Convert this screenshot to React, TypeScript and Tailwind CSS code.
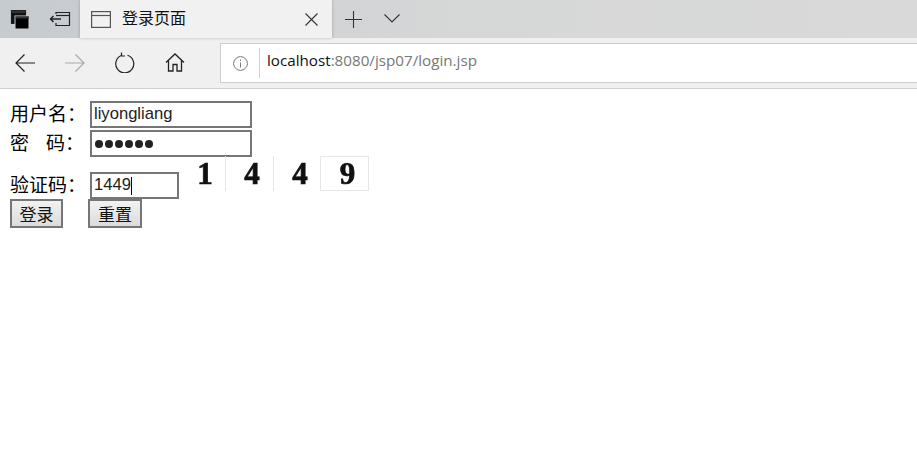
import React from "react";

const cjk = "font-['Liberation_Sans','Noto_Sans_CJK_SC',sans-serif]";
const digit = "h-[35px] flex items-center justify-center font-['Liberation_Serif',serif] font-bold text-[31px] text-[#111] [-webkit-text-stroke:0.7px_#111] blur-[0.5px] leading-none";
const label = "w-[80px] pb-[2px] whitespace-nowrap text-[19px] text-black font-['Noto_Sans_CJK_SC',sans-serif] font-normal";
const btn = "h-[29px] border-2 border-[#767676] bg-gradient-to-b from-[#f2f2f2] to-[#dcdcdc] text-[17px] text-[#111] font-['Noto_Sans_CJK_SC',sans-serif] font-normal";
const fieldBase = "h-[27px] border-2 border-[#767676] bg-white pl-[2px] flex items-center text-[16.6px] text-[#222] font-['Liberation_Sans',sans-serif]";

export default function App() {
  return (
    <div className={`w-[917px] h-[463px] bg-white overflow-hidden ${cjk}`}>
      {/* tab strip */}
      <div className="h-[38px] flex bg-gradient-to-r from-[#c6cbd0] via-[#d6d7d7] to-[#d9d9d9]">
        <div className="w-[40px] flex items-center justify-center">
          <svg width="20" height="20" viewBox="0 0 20 20">
            <path d="M1.500 1.500h14v3h-14z" fill="#333" />
            <path d="M1.500 1.500h14v13h-14z" fill="none" stroke="#222" strokeWidth="1.200" />
            <rect x="1.500" y="4" width="14" height="10" fill="#111" />
            <rect x="5" y="7" width="14" height="13" fill="#000" stroke="#d0d2d3" strokeWidth="1" />
            <rect x="5.500" y="7.500" width="13.500" height="2" fill="#333" />
          </svg>
        </div>
        <div className="w-[40px] flex items-center justify-center">
          <svg width="22" height="16" viewBox="0 0 22 16" fill="none" stroke="#222" strokeWidth="1.200">
            <path d="M7 3V1.500h13.500v13H7V12" />
            <path d="M7 4.500h13" />
            <path d="M1 8h11M4.500 5 1.500 8l3 3" strokeWidth="1.400" />
          </svg>
        </div>
        <div className="w-[252px] bg-[#f1f1f1] flex items-center pl-[11px] shadow-[0_0_3px_rgba(0,0,0,0.25)]">
          <svg width="20" height="17" viewBox="0 0 20 17" fill="none" stroke="#555" strokeWidth="1.200">
            <rect x="0.600" y="0.600" width="18.800" height="15.800" />
            <path d="M0.600 4.500h18.800" />
          </svg>
          <span className="ml-[11px] -mt-[4px] text-[16px] text-[#111] font-['Noto_Sans_CJK_SC',sans-serif] font-normal whitespace-nowrap">登录页面</span>
          <svg className="ml-auto mr-[14px]" width="13" height="13" viewBox="0 0 13 13" stroke="#333" strokeWidth="1.100">
            <path d="M0.500 0.500l12 12M12.500 0.500l-12 12" />
          </svg>
        </div>
        <div className="w-[42px] flex items-center justify-center">
          <svg width="17" height="17" viewBox="0 0 17 17" stroke="#333" strokeWidth="1.100">
            <path d="M0 8.500h17M8.500 0v17" />
          </svg>
        </div>
        <div className="w-[36px] -mt-[2px] flex items-center justify-center">
          <svg width="16" height="9" viewBox="0 0 16 9" fill="none" stroke="#333" strokeWidth="1.100">
            <path d="M0.500 0.500 8 8l7.500-7.500" />
          </svg>
        </div>
      </div>

      {/* toolbar */}
      <div className="h-[51px] bg-[#f0f0f0] border-b-[1.5px] border-[#cfcfcf] flex items-start">
        <div className="w-[220px] h-[49px] flex items-center shrink-0">
          <div className="w-[50px] flex justify-center">
            <svg width="20" height="18" viewBox="0 0 20 18" fill="none" stroke="#222" strokeWidth="1.200">
              <path d="M20 9H1M9.500 .5 1 9l8.500 8.500" />
            </svg>
          </div>
          <div className="w-[50px] flex justify-center">
            <svg width="20" height="18" viewBox="0 0 20 18" fill="none" stroke="#aaa" strokeWidth="1.200">
              <path d="M0 9h19M10.500 .5 19 9l-8.500 8.500" />
            </svg>
          </div>
          <div className="w-[50px] flex justify-center">
            <svg width="20" height="21" viewBox="0 0 20 21" fill="none" stroke="#222" strokeWidth="1.200">
              <path d="M12.500 3.300a9 9 0 1 1-5.500 0" />
              <path d="M6.500 .5v3.500H10" />
            </svg>
          </div>
          <div className="w-[50px] flex justify-center">
            <svg width="20" height="19" viewBox="0 0 20 19" fill="none" stroke="#222" strokeWidth="1.300">
              <path d="M1 9.500 10 1l9 8.500" />
              <path d="M3.500 7.500V18h4.500v-6.500h4V18h4.500V7.500" />
            </svg>
          </div>
        </div>
        <div className="mt-[5px] h-[40px] flex-1 bg-white border border-r-0 border-[#cccccc] flex items-center">
          <div className="w-[38px] flex justify-center">
            <svg width="15" height="15" viewBox="0 0 15 15" fill="none" stroke="#777" strokeWidth="1">
              <circle cx="7.500" cy="7.500" r="6.900" />
              <path d="M7.500 6.500v5M7.500 3.500v1.500" />
            </svg>
          </div>
          <div className="w-px h-[30px] bg-[#d2d2d2]" />
          <div className="ml-[7px] -mt-[6px] text-[15.2px] font-['Open_Sans','Noto_Sans',sans-serif] text-[#111] whitespace-nowrap">
            localhost<span className="text-[#777]">:8080/jsp07/login.jsp</span>
          </div>
        </div>
      </div>

      {/* page */}
      <div className="pl-[10px] pt-[12px]">
        <div className="flex items-center h-[27px]">
          <span className={label}>用户名：</span>
          <div className={`${fieldBase} w-[162px]`}>liyongliang</div>
        </div>
        <div className="flex items-center h-[27px] mt-[2px]">
          <span className={label}>密<span className="ml-[17px]">码：</span></span>
          <div className={`${fieldBase} w-[162px] gap-[2px] pl-[3px]`}>
            {[0, 1, 2, 3, 4, 5].map((i) => (
              <span key={i} className="w-[8px] h-[8px] rounded-full bg-[#222]" />
            ))}
          </div>
        </div>
        <div className="flex items-end h-[42px]">
          <span className={`${label} h-[27px] flex items-center`}>验证码：</span>
          <div className={`${fieldBase} w-[89px] border-[#222]`}>
            1449<span className="w-px h-[18px] bg-black" />
          </div>
          <div className="flex self-start -mt-[1px] ml-[6px]">
            <div className={`${digit} w-[41px] border-r border-[#e6e6e6]`}>1</div>
            <div className={`${digit} w-[48px] pl-[5px] border-r border-[#e6e6e6]`}>4</div>
            <div className={`${digit} w-[47px] pl-[6px] border-r border-[#e6e6e6]`}>4</div>
            <div className={`${digit} w-[48px] pl-[6px] border-t border-r border-b border-[#e6e6e6]`}>9</div>
          </div>
        </div>
        <div className="flex h-[29px]">
          <button className={`${btn} w-[53px]`}>登录</button>
          <button className={`${btn} ml-[25px] w-[54px]`}>重置</button>
        </div>
      </div>
    </div>
  );
}
